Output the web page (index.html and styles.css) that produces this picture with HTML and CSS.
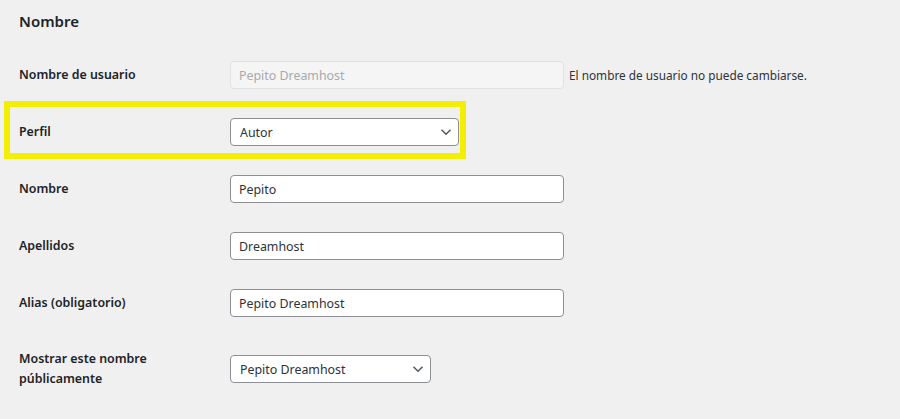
FILE: index.html
```html
<!DOCTYPE html>
<html lang="es">

<head>
    <meta charset="UTF-8">
    <meta name="viewport" content="width=device-width, initial-scale=1.0">
    <link rel="stylesheet" href="styles.css">
    <title>Perfil</title>
</head>

<body>
    <div class="wrap">
        <h2>Nombre</h2>

        <div class="form-table">
            <div class="row">
                <label class="th" for="user_login">Nombre de usuario</label>
                <div class="td">
                    <input class="regular-text" type="text" id="user_login" value="Pepito Dreamhost" disabled>
                    <span class="description">El nombre de usuario no puede cambiarse.</span>
                </div>
            </div>

            <div class="row highlight">
                <label class="th" for="role">Perfil</label>
                <div class="td">
                    <div class="select role-select">
                        <span>Autor</span>
                        <svg width="12" height="8" viewBox="0 0 12 8"><path d="M1.5 1.8 6 6.2 10.5 1.8" fill="none" stroke="#50575e" stroke-width="1.5"/></svg>
                    </div>
                </div>
            </div>

            <div class="row">
                <label class="th" for="first_name">Nombre</label>
                <div class="td">
                    <input class="regular-text" type="text" id="first_name" value="Pepito">
                </div>
            </div>

            <div class="row">
                <label class="th" for="last_name">Apellidos</label>
                <div class="td">
                    <input class="regular-text" type="text" id="last_name" value="Dreamhost">
                </div>
            </div>

            <div class="row">
                <label class="th" for="nickname">Alias (obligatorio)</label>
                <div class="td">
                    <input class="regular-text" type="text" id="nickname" value="Pepito Dreamhost">
                </div>
            </div>

            <div class="row tall">
                <label class="th" for="display_name">Mostrar este nombre públicamente</label>
                <div class="td">
                    <div class="select display-select">
                        <span>Pepito Dreamhost</span>
                        <svg width="12" height="8" viewBox="0 0 12 8"><path d="M1.5 1.8 6 6.2 10.5 1.8" fill="none" stroke="#50575e" stroke-width="1.5"/></svg>
                    </div>
                </div>
            </div>
        </div>
    </div>
</body>

</html>
```

FILE: styles.css
```css
* {
    margin: 0;
    padding: 0;
    box-sizing: border-box;
}

body {
    background: #f0f0f1;
    color: #1d2327;
    font-family: "Noto Sans", "Open Sans", sans-serif;
    font-size: 12.4px;
}

.wrap {
    padding-left: 19px;
}

h2 {
    font-size: 15px;
    font-weight: 600;
    line-height: 22px;
    padding-top: 10px;
    margin-bottom: 14px;
}

.row {
    display: flex;
    align-items: center;
    padding: 15px 0 14px;
}

.row.tall {
    padding-top: 18px;
}

.th {
    width: 211px;
    padding-right: 11px;
    font-weight: 600;
    line-height: 20px;
    flex-shrink: 0;
}

.td {
    display: flex;
    align-items: center;
}

.regular-text {
    width: 334px;
    height: 28px;
    padding: 0 8px;
    border: 1px solid #8c8f94;
    border-radius: 4px;
    background: #fff;
    color: #2c3338;
    font: inherit;
}

.regular-text:disabled {
    background: #f5f5f5;
    border-color: #e2e2e4;
    color: #a7aaad;
}

.description {
    margin-left: 5px;
    font-size: 11.8px;
    color: #2c3338;
}

.select {
    display: flex;
    align-items: center;
    justify-content: space-between;
    height: 28px;
    padding: 0 6px 0 9px;
    border: 1px solid #8c8f94;
    border-radius: 4px;
    background: #fff;
    color: #2c3338;
}

.role-select {
    width: 229px;
}

.display-select {
    width: 201px;
}

.highlight {
    position: relative;
}

/* yellow marker drawn over the row */
.highlight::after {
    content: "";
    box-sizing: border-box;
    position: absolute;
    left: -15px;
    top: -2px;
    width: 462px;
    height: 58px;
    border: 6px solid #f4ef00;
    pointer-events: none;
}
```
